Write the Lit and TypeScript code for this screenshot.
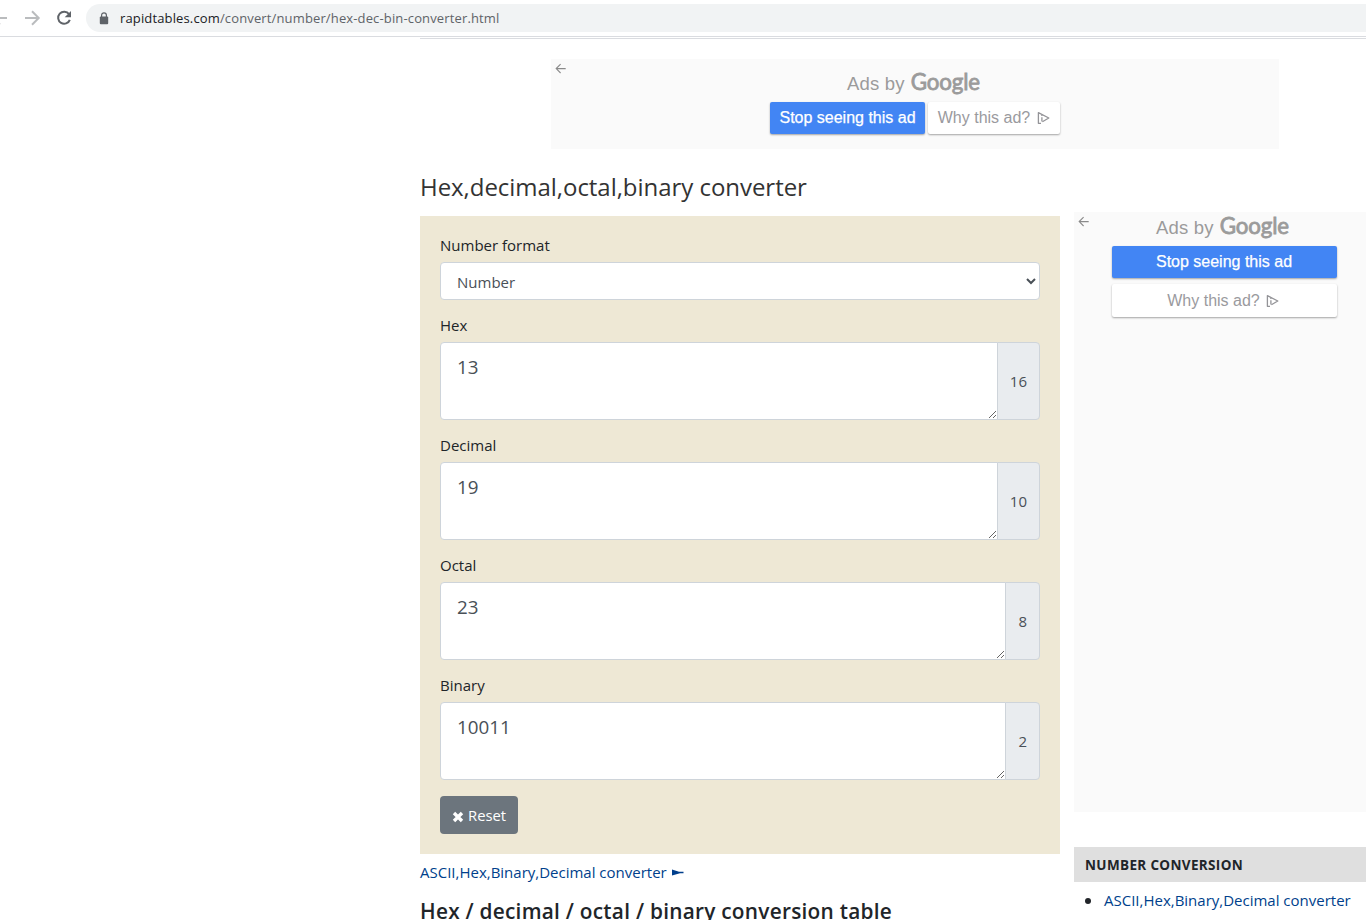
import { LitElement, html, css } from "lit";
import { customElement, property } from "lit/decorators.js";

@customElement("ad-box")
class AdBox extends LitElement {
  @property({ type: Boolean, reflect: true }) tall = false;

  static styles = css`
    :host {
      display: block;
      position: relative;
      box-sizing: border-box;
      width: 728px;
      height: 90px;
      padding-top: 10px;
      background: #fafafa;
      font-family: "Liberation Sans", Arial, sans-serif;
    }
    :host([tall]) {
      width: 300px;
      height: 600px;
      padding-top: 1px;
    }
    .back {
      position: absolute;
      left: 4px;
      top: 4px;
    }
    .by {
      display: flex;
      justify-content: center;
      align-items: baseline;
      height: 33px;
      padding-right: 3px;
      line-height: 26px;
      font-size: 18.5px;
      color: #9b9b9b;
      letter-spacing: 0.2px;
    }
    .google {
      margin-left: 6px;
      font-family: Lato, sans-serif;
      font-weight: 400;
      font-size: 22.3px;
      letter-spacing: -0.15px;
      -webkit-text-stroke: 0.8px #9b9b9b;
    }
    .buttons {
      display: flex;
      justify-content: center;
      gap: 3px;
    }
    .btn {
      box-sizing: border-box;
      display: flex;
      justify-content: center;
      align-items: center;
      height: 32px;
      border-radius: 2px;
      font-size: 16px;
      box-shadow: 0 1px 2px rgba(0, 0, 0, 0.35);
    }
    .stop {
      width: 155px;
      background: #4285f4;
      color: #fff;
      -webkit-text-stroke: 0.25px #fff;
    }
    .why {
      width: 132px;
      gap: 7px;
      background: #fff;
      color: #9a9a9e;
    }
    :host([tall]) .buttons {
      flex-direction: column;
      align-items: center;
      gap: 6px;
    }
    :host([tall]) .btn {
      width: 225px;
    }
    :host([tall]) .why {
      height: 33px;
      gap: 6px;
      padding-right: 2px;
    }
    svg {
      display: block;
    }
  `;

  render() {
    return html`
      <svg class="back" width="12" height="12" viewBox="0 0 12 12" fill="none" stroke="#8a8a8a" stroke-width="1.1">
        <path d="M10.7 5.6H1.2M5.6 1.2L1.2 5.6l4.4 4.4" />
      </svg>
      <div class="by"><span>Ads by</span><span class="google">Google</span></div>
      <div class="buttons">
        <div class="btn stop">Stop seeing this ad</div>
        <div class="btn why">
          <span>Why this ad?</span>
          <svg width="13" height="14" viewBox="0 0 13 14" fill="none" stroke="#949498" stroke-width="1.3">
            <path d="M4 12.3H1.400V1.600L11.800 7L5.400 10.800" stroke-linejoin="round" />
            <path d="M4.900 6.200v4.400M4.900 3.800v1.300" />
          </svg>
        </div>
      </div>
    `;
  }
}

const FIELDS = [
  { label: "Hex", value: "13", base: "16" },
  { label: "Decimal", value: "19", base: "10" },
  { label: "Octal", value: "23", base: "8" },
  { label: "Binary", value: "10011", base: "2" },
];

@customElement("app-root")
class AppRoot extends LitElement {
  static styles = css`
    :host {
      display: block;
      width: 100%;
      height: 920px;
      overflow: hidden;
      background: #fff;
      color: #212529;
      font-family: "Open Sans", "Noto Sans", sans-serif;
      font-size: 15px;
    }
    .toolbar {
      box-sizing: border-box;
      display: flex;
      align-items: center;
      height: 37px;
      padding-bottom: 1px;
      border-bottom: 1px solid #dadce0;
    }
    .nav {
      display: block;
      flex: none;
      width: 86px;
      height: 36px;
    }
    .address {
      display: flex;
      align-items: center;
      flex: 1;
      height: 28px;
      margin-top: 1px;
      padding-left: 13px;
      border-radius: 14px 0 0 14px;
      background: #f1f3f4;
      color: #5f6368;
      font-size: 13px;
    }
    .address svg {
      margin-right: 11px;
    }
    .url {
      letter-spacing: 0.14px;
    }
    .host {
      color: #202124;
    }
    .page {
      width: 990px;
      margin-left: 420px;
      margin-top: 1px;
      border-top: 1px solid #dadce0;
    }
    .top-ad {
      display: flex;
      justify-content: center;
      padding-top: 20px;
    }
    .columns {
      display: flex;
      gap: 14px;
    }
    main {
      width: 640px;
    }
    h1 {
      margin: 0;
      height: 67px;
      line-height: 76px;
      font-size: 24px;
      font-weight: 400;
      letter-spacing: -0.04px;
      color: #333;
      white-space: nowrap;
    }
    .panel {
      padding: 20px;
      background: #eee8d5;
    }
    label {
      display: block;
      height: 18px;
      line-height: 18px;
      margin-bottom: 8px;
    }
    select {
      box-sizing: border-box;
      display: block;
      width: 600px;
      height: 38px;
      margin-bottom: 16px;
      padding: 1px 1px 0 12px;
      border: 1px solid #ced4da;
      border-radius: 4px;
      background: #fff;
      color: #495057;
      font-family: inherit;
      font-size: 15px;
    }
    .group {
      display: flex;
      height: 78px;
      margin-bottom: 16px;
    }
    textarea {
      box-sizing: border-box;
      flex: 1;
      height: 78px;
      margin: 0;
      padding: 10px 16px 8px;
      border: 1px solid #ced4da;
      border-radius: 4px 0 0 4px;
      color: #495057;
      font-family: inherit;
      font-size: 18.8px;
      line-height: 29px;
      overflow: auto;
      outline: none;
    }
    .base {
      box-sizing: border-box;
      display: flex;
      align-items: center;
      margin-left: -1px;
      padding: 0 12px;
      border: 1px solid #ced4da;
      border-radius: 0 4px 4px 0;
      background: #e9ecef;
      color: #495057;
      font-size: 15px;
    }
    .reset {
      box-sizing: border-box;
      display: flex;
      align-items: center;
      width: 78px;
      height: 38px;
      padding: 0 12px 1px;
      border: 0;
      border-radius: 4px;
      background: #6c757d;
      color: #fff;
      font-family: inherit;
      font-size: 14.8px;
    }
    .reset svg {
      flex: none;
      margin: 4px 4px 0 0;
    }
    a {
      color: #003f8c;
      text-decoration: none;
    }
    .more {
      display: flex;
      align-items: center;
      height: 36px;
      white-space: nowrap;
    }
    .more svg {
      margin: 0 0 0 5px;
    }
    h2 {
      margin: 0;
      line-height: 42px;
      font-size: 20.8px;
      font-weight: 600;
      letter-spacing: 0.26px;
      white-space: nowrap;
    }
    aside {
      width: 300px;
      padding-top: 63px;
    }
    h5 {
      box-sizing: border-box;
      height: 35px;
      margin: 35px 0 0;
      padding-left: 11px;
      line-height: 36px;
      font-size: 13.5px;
      font-weight: 700;
      letter-spacing: 0.35px;
      background: #dfdfdf;
      white-space: nowrap;
    }
    ul {
      margin: 0;
      padding: 0;
      list-style: none;
    }
    li {
      display: flex;
      align-items: center;
      height: 36px;
      padding-left: 11px;
      white-space: nowrap;
    }
    .dot {
      width: 6px;
      height: 6px;
      margin: 2px 13px 0 0;
      border-radius: 50%;
      background: #212529;
    }
  `;

  render() {
    return html`
      <div class="toolbar">
        <svg class="nav" viewBox="0 0 86 36" fill="none" stroke-width="2">
          <path d="M-6 18H7" stroke="#babcbe" />
          <path d="M-1 11.5L-7 18L0 24.500" stroke="#babcbe" />
          <path d="M25 18H38.5M32 11.3L38.7 18L32 24.7" stroke="#babcbe" />
          <path d="M69 14.2A6 6 0 1 0 69.8 19.8" stroke="#5f6368" />
          <path d="M71 11v6.3h-6.3z" fill="#5f6368" />
        </svg>
        <div class="address">
          <svg width="10" height="13" viewBox="0 0 10 13">
            <rect x="0.8" y="4.6" width="8.4" height="7.6" rx="1" fill="#5f6368" />
            <path d="M2.6 5V3.2a2.4 2.4 0 0 1 4.8 0V5" fill="none" stroke="#5f6368" stroke-width="1.2" />
          </svg>
          <span class="url"><span class="host">rapidtables.com</span>/convert/number/hex-dec-bin-converter.html</span>
        </div>
      </div>
      <div class="page">
        <div class="top-ad"><ad-box></ad-box></div>
        <div class="columns">
          <main>
            <h1>Hex,decimal,octal,binary converter</h1>
            <div class="panel">
              <label>Number format</label>
              <select>
                <option>Number</option>
              </select>
              ${FIELDS.map(
                (f) => html`
                  <label>${f.label}</label>
                  <div class="group">
                    <textarea spellcheck="false" .value=${f.value}></textarea>
                    <span class="base">${f.base}</span>
                  </div>
                `
              )}
              <button class="reset">
                <svg width="12" height="12" viewBox="0 0 12 12" stroke="#fff" stroke-width="3.4">
                  <path d="M2 2l8 8M10 2l-8 8" />
                </svg>
                <span>Reset</span>
              </button>
            </div>
            <div class="more">
              <a href="#">ASCII,Hex,Binary,Decimal converter</a>
              <svg width="12" height="7" viewBox="0 0 12 7" fill="#003f8c">
                <path d="M0 .5L7 2.800H11.500V4.200H8L0 6.500z" />
              </svg>
            </div>
            <h2>Hex / decimal / octal / binary conversion table</h2>
          </main>
          <aside>
            <ad-box tall></ad-box>
            <h5>NUMBER CONVERSION</h5>
            <ul>
              <li><span class="dot"></span><a href="#">ASCII,Hex,Binary,Decimal converter</a></li>
            </ul>
          </aside>
        </div>
      </div>
    `;
  }
}
